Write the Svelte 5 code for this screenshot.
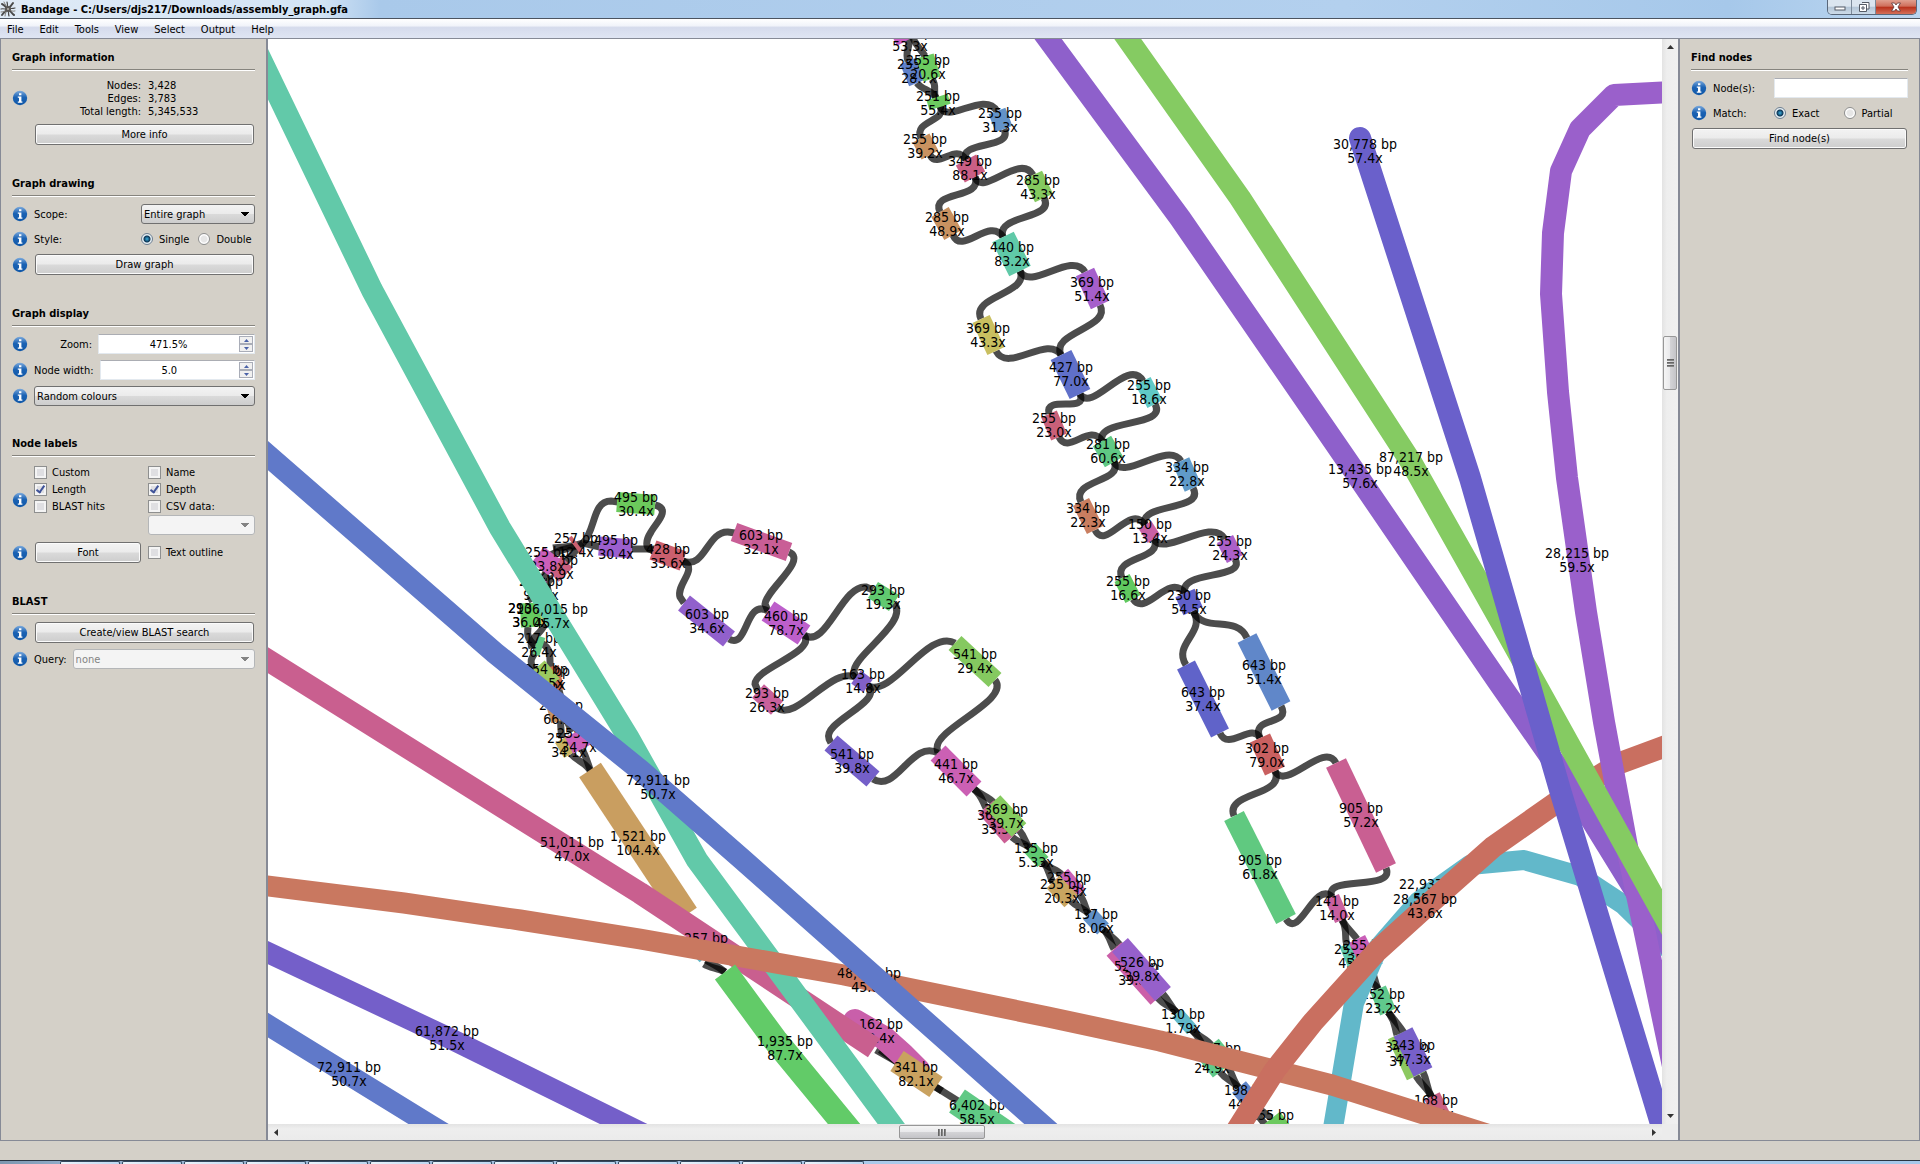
<script>
  // [colour, width, points, first line, second line, label centre x, first baseline, cap]
  const nodes = [
    ['#c85fc0', 20, '900,30 906,41', '255 bp', '53.3x', 910, 37],
    ['#5f80c9', 17, '908,61 917,83', '255 bp', '28.7x', 919, 69],
    ['#6ccb60', 18, '925,56 932,79', '255 bp', '20.6x', 928, 65],
    ['#6ccb60', 22, '937,97 940,107', '251 bp', '55.4x', 938, 101],
    ['#6393c9', 18, '997,111 1004,129', '255 bp', '31.3x', 1000, 118],
    ['#c99260', 19, '921,138 930,155', '255 bp', '39.2x', 925, 144],
    ['#cb5f85', 23, '966,160 975,177', '349 bp', '88.1x', 970, 166],
    ['#85c960', 20, '1033,175 1044,198', '285 bp', '43.3x', 1038, 185],
    ['#c99260', 20, '940,212 953,235', '285 bp', '48.9x', 947, 222],
    ['#60c9a8', 24, '1003,237 1020,271', '440 bp', '83.2x', 1012, 252],
    ['#a65fcb', 20, '1085,272 1100,305', '369 bp', '51.4x', 1092, 287],
    ['#c9bf60', 19, '981,319 996,351', '369 bp', '43.3x', 988, 333],
    ['#6070c9', 23, '1061,355 1080,394', '427 bp', '77.0x', 1071, 372],
    ['#60c9c6', 17, '1143,381 1155,404', '255 bp', '18.6x', 1149, 390],
    ['#c96079', 17, '1049,414 1059,437', '255 bp', '23.0x', 1054, 423],
    ['#60c984', 21, '1102,441 1114,462', '281 bp', '60.6x', 1108, 449],
    ['#609bc9', 18, '1181,461 1193,488', '334 bp', '22.8x', 1187, 472],
    ['#c97e60', 18, '1081,502 1095,530', '334 bp', '22.3x', 1088, 513],
    ['#c960a5', 15, '1145,525 1154,539', '150 bp', '13.4x', 1150, 529],
    ['#ac60c9', 18, '1225,539 1235,559', '255 bp', '24.3x', 1230, 546],
    ['#60c95f', 17, '1122,578 1133,599', '255 bp', '16.6x', 1128, 586],
    ['#6060c9', 21, '1185,593 1193,611', '230 bp', '54.5x', 1189, 600],
    ['#6087c9', 21, '1247,638 1281,706', '643 bp', '51.4x', 1264, 670],
    ['#6063c9', 20, '1186,665 1220,733', '643 bp', '37.4x', 1203, 697],
    ['#c96060', 22, '1260,738 1275,771', '302 bp', '79.0x', 1267, 753],
    ['#c95f92', 22, '1336,763 1386,868', '905 bp', '57.2x', 1361, 813],
    ['#60c980', 22, '1234,816 1286,919', '905 bp', '61.8x', 1260, 865],
    ['#c960a0', 15, '1332,897 1342,920', '141 bp', '14.0x', 1337, 906],
    ['#60c9ad', 16, '1347,944 1356,966', '255 bp', '45.2x', 1356, 954],
    ['#c95fb8', 18, '1357,939 1368,961', '255 bp', '35.1x', 1365, 950],
    ['#60c98c', 17, '1378,989 1388,1012', '252 bp', '23.2x', 1383, 999],
    ['#8dc960', 20, '1397,1035 1416,1076', '343 bp', '37.4x', 1407, 1052],
    ['#7760c9', 21, '1403,1032 1423,1072', '343 bp', '47.3x', 1413, 1050],
    ['#c96085', 17, '1432,1096 1443,1118', '168 bp', '41.3x', 1436, 1105],

    ['#6cc95c', 20, '617,502 655,505', '495 bp', '30.4x', 636, 502],
    ['#9b5fce', 19, '599,546 632,549', '495 bp', '30.4x', 616, 545],
    ['#cb5f6e', 20, '653,550 683,561', '428 bp', '35.6x', 668, 554],
    ['#c95e96', 19, '734,532 789,552', '603 bp', '32.1x', 761, 540],
    ['#9160cc', 19, '684,603 729,639', '603 bp', '34.6x', 707, 619],
    ['#bd5fcb', 23, '768,611 804,635', '460 bp', '78.7x', 786, 621],
    ['#61c970', 19, '873,590 894,603', '293 bp', '19.3x', 883, 595],
    ['#c9619b', 18, '758,691 777,708', '293 bp', '26.3x', 767, 698],
    ['#8260c9', 16, '856,677 868,686', '163 bp', '14.8x', 863, 679],
    ['#85c960', 19, '955,643 995,680', '541 bp', '29.4x', 975, 659],
    ['#745fc9', 20, '831,743 873,779', '541 bp', '39.8x', 852, 759],
    ['#cb60b4', 21, '938,753 974,789', '441 bp', '46.7x', 956, 769],
    ['#cb5f95', 20, '986,807 1012,837', '369 bp', '33.5x', 999, 820],
    ['#85cb5f', 20, '993,802 1019,830', '369 bp', '39.7x', 1006, 814],
    ['#60c971', 15, '1030,848 1043,862', '135 bp', '5.33x', 1036, 853],
    ['#c960b8', 16, '1062,874 1079,894', '255 bp', '24.3x', 1069, 882],
    ['#c9a560', 18, '1053,882 1071,901', '255 bp', '20.3x', 1062, 889],
    ['#6090c9', 16, '1089,914 1103,929', '137 bp', '8.06x', 1096, 919],
    ['#cb5fa8', 20, '1114,949 1158,998', '526 bp', '39.8x', 1136, 971],
    ['#9660cb', 21, '1120,945 1163,994', '526 bp', '39.8x', 1142, 967],
    ['#60b9c9', 13, '1177,1013 1192,1030', '130 bp', '1.79x', 1183, 1019],
    ['#60c989', 20, '1211,1045 1225,1062', '257 bp', '24.6x', 1219, 1053],
    ['#60c989', 18, '1206,1054 1220,1072', '257 bp', '24.9x', 1212, 1059],
    ['#6087c9', 18, '1239,1087 1254,1105', '198 bp', '44.6x', 1246, 1095],
    ['#6cc95f', 20, '1272,1118 1286,1136', '255 bp', '26.3x', 1272, 1120],

    ['#cb6070', 4, '570,537 582,553', '257 bp', '12.4x', 576, 543],
    ['#cb6080', 16, '567,562 553,576', '255 bp', '26.9x', 556, 565],
    ['#cb5fba', 21, '552,553 540,569', '255 bp', '23.8x', 547, 557],
    ['#cb5fba', 8, '543,580 540,590', '216 bp', '97.4x', 541, 586],
    ['#c9c060', 9, '540,611 541,625', '293 bp', '36.0x', 530, 613],
    ['#65cb5f', 20, '530,603 531,627', '293 bp', '36.0x', 530, 613],
    ['#60c985', 7, '542,637 536,655', '217 bp', '26.4x', 539, 643],
    ['#c96c50', 10, '554,666 559,690', '254 bp', '30.5x', 548, 676],
    ['#9cc960', 20, '537,667 552,685', '254 bp', '40.5x', 546, 674],
    ['#c99260', 10, '552,708 556,722', '255 bp', '66.2x', 561, 710],
    ['#c9b360', 16, '562,739 571,754', '255 bp', '34.1x', 569, 743],
    ['#cb5fba', 20, '574,733 582,749', '255 bp', '34.7x', 579, 738],
    ['#c99e60', 26, '590,770 686,915', '1,521 bp', '104.4x', 638, 841],

    ['#c95faa', 24, '855,1021 884,1038 903,1055 918,1070', '162 bp', '8.4x', 881, 1029, 'round'],
    ['#c95f8f', 22, '258,654 640,893 874,1048', '51,011 bp', '47.0x', 572, 847],
    ['#60b9c9', 12, '696,950 704,958', '257 bp', '31.2x', 706, 943],
    ['#c9a260', 24, '897,1061 936,1087', '341 bp', '82.1x', 916, 1072],
    ['#60c985', 28, '957,1101 1024,1147', '6,402 bp', '58.5x', 977, 1110],
    ['#62c9a9', 22, '251,39 372,290 500,528 628,737 697,860 892,1125 903,1140', '106,015 bp', '45.7x', 552, 614],
    ['#62b8ca', 20, '1331,1140 1354,1003 1378,948 1418,902 1470,865 1524,860 1580,876 1624,905 1672,952', '22,937 bp', '52.6x', 1431, 889],
    ['#c97860', 21, '260,885 404,903 520,920 640,939 844,975 1048,1017 1160,1041 1332,1085 1490,1135', '48,612 bp', '45.6x', 869, 978],
    ['#62cb68', 25, '725,972 775,1040 858,1141', '1,935 bp', '87.7x', 785, 1046],
    ['#6079c9', 22, '258,447 495,653 640,770 743,860 1060,1141', '72,911 bp', '50.7x', 658, 785],
    ['#6079c9', 21, '258,1019 430,1125 455,1140', '72,911 bp', '50.7x', 349, 1072],
    ['#745fc9', 21, '258,948 447,1037 650,1137', '61,872 bp', '51.5x', 447, 1036],
    ['#c96f60', 22, '1230,1141 1275,1070 1313,1022 1377,951 1440,894 1493,847 1560,800 1620,763 1674,743', '28,567 bp', '43.6x', 1425, 904],
    ['#8e60cb', 22, '1040,28 1180,218 1359,478 1497,680 1570,785 1675,955', '13,435 bp', '57.6x', 1360, 474],
    ['#9a60cb', 22, '1672,92 1614,95 1580,129 1561,171 1553,233 1551,294 1558,392 1567,478 1586,612 1604,722 1629,857 1678,1090', '28,215 bp', '59.5x', 1577, 558],
    ['#85cb62', 22, '1120,28 1240,198 1411,462 1500,620 1672,930', '87,217 bp', '48.5x', 1411, 462],
    ['#6a60cb', 22, '1360,138 1470,478 1560,790 1672,1160', '30,778 bp', '57.4x', 1365, 149, 'round'],
  ];

  const edges = [
    'M912,36 C916,46 920,48 925,56', 'M908,36 C912,48 904,50 908,61',
    'M917,83 C922,90 932,90 936,98', 'M932,79 C938,88 932,90 936,98',
    'M940,106 C946,126 984,90 997,111', 'M940,106 C948,122 913,120 921,138',
    'M1004,129 C1014,150 958,140 966,160', 'M930,155 C938,170 956,142 966,160',
    'M975,177 C982,198 1020,152 1033,175', 'M975,177 C983,200 930,190 940,212',
    'M1044,198 C1056,220 995,214 1003,237', 'M953,235 C962,256 990,216 1003,237',
    'M1020,271 C1030,292 1072,250 1085,272', 'M1020,271 C1030,294 970,296 981,319',
    'M1100,305 C1112,328 1050,332 1061,355', 'M996,351 C1008,374 1048,334 1061,355',
    'M1080,394 C1092,414 1128,356 1143,381', 'M1080,394 C1088,414 1044,394 1049,414',
    'M1155,404 C1168,428 1096,418 1102,441', 'M1059,437 C1068,456 1090,422 1102,441',
    'M1114,462 C1124,482 1168,440 1181,461', 'M1114,462 C1124,482 1070,480 1081,502',
    'M1193,488 C1206,512 1138,502 1145,525', 'M1095,530 C1106,552 1130,502 1145,525',
    'M1154,539 C1163,558 1212,516 1225,539', 'M1154,539 C1164,560 1112,556 1122,578',
    'M1235,559 C1247,580 1178,570 1185,593', 'M1133,599 C1146,618 1168,572 1185,593',
    'M1193,611 C1204,634 1236,614 1247,638', 'M1193,611 C1207,632 1172,644 1186,665',
    'M1281,706 C1292,726 1250,716 1260,738', 'M1220,733 C1228,752 1252,722 1260,738',
    'M1275,771 C1286,792 1324,740 1336,763', 'M1275,771 C1286,796 1224,792 1234,816',
    'M1386,868 C1396,892 1322,874 1332,897', 'M1286,919 C1300,940 1314,880 1332,897',
    'M1342,920 C1348,930 1344,938 1347,945', 'M1342,920 C1348,930 1352,932 1357,939',
    'M1356,966 C1364,980 1372,980 1378,989', 'M1368,961 C1374,972 1374,980 1378,989',
    'M1388,1012 C1396,1022 1394,1026 1397,1035', 'M1388,1012 C1396,1022 1400,1026 1406,1036',
    'M1416,1076 C1422,1086 1428,1088 1432,1098', 'M1423,1072 C1428,1082 1426,1088 1432,1098',

    'M583,543 C596,530 592,501 611,501 L618,502', 'M655,505 C672,509 655,524 651,532 C644,543 646,551 655,550',
    'M583,543 L600,547', 'M632,549 L655,549',
    'M683,561 C705,570 707,531 728,532 L735,533', 'M683,561 C699,569 676,584 680,597 L684,603',
    'M789,552 C808,560 766,590 765,604 L768,611', 'M729,639 C748,650 745,598 768,611',
    'M804,635 C826,650 842,584 866,587 L873,590', 'M804,635 C817,652 755,668 755,684 L758,691',
    'M894,603 C910,622 853,655 854,672 L857,678', 'M777,708 C798,722 832,664 857,678',
    'M868,686 C892,698 928,628 955,643', 'M868,686 C884,702 822,722 829,739 L831,743',
    'M995,680 C1011,700 936,728 937,748 L938,753', 'M873,779 C896,794 912,739 938,753',
    'M974,789 C982,796 982,800 986,808', 'M974,789 C982,796 988,796 994,803',
    'M1012,837 C1020,844 1024,842 1030,848', 'M1019,830 C1026,838 1024,842 1030,848',
    'M1043,862 C1050,870 1048,874 1053,882', 'M1043,862 C1050,870 1056,868 1062,875',
    'M1071,901 C1078,908 1084,908 1089,914', 'M1079,894 C1086,902 1084,908 1089,914',
    'M1103,929 C1110,936 1110,942 1114,949', 'M1103,929 C1110,936 1114,938 1120,945',
    'M1158,998 C1164,1006 1172,1006 1177,1013', 'M1163,994 C1170,1002 1170,1006 1177,1013',
    'M1192,1030 C1200,1038 1202,1044 1206,1054', 'M1192,1030 C1200,1038 1206,1038 1212,1046',
    'M1220,1072 C1226,1080 1232,1080 1239,1088', 'M1225,1062 C1232,1070 1232,1080 1239,1088',
    'M1254,1105 C1262,1110 1264,1114 1272,1118', 'M1252,1106 C1258,1118 1264,1122 1268,1128',

    'M583,543 C570,548 566,546 553,548', 'M583,543 C574,552 570,556 565,564', 'M576,546 C566,550 560,548 550,556',
    'M548,570 C538,580 548,590 541,600', 'M553,578 C542,582 550,592 550,600',
    'M528,600 C540,594 546,590 548,584',
    'M528,627 C526,640 532,642 537,648', 'M545,624 C540,636 528,638 532,648',
    'M537,650 C530,660 530,660 533,670', 'M536,640 C552,648 550,652 550,670',
    'M559,690 C564,705 558,715 562,738', 'M560,695 C562,708 566,720 572,732',
    'M582,749 C586,756 588,764 591,772', 'M571,754 C578,762 586,762 591,772',
    'M706,960 C712,964 718,966 725,972', 'M704,964 C710,968 718,968 725,972',
    'M876,1050 L897,1062', 'M880,1050 L897,1062', 'M934,1086 L958,1101', 'M934,1086 L942,1091',
  ];

  const menus = ['File', 'Edit', 'Tools', 'View', 'Select', 'Output', 'Help'];
  const tasks = Array.from({ length: 13 });

  let style = $state('single');
  let match = $state('exact');
  let zoom = $state('471.5%');
  let nodeWidth = $state('5.0');
  let query = $state('');
  let labels = $state({ custom: false, name: false, length: true, depth: true, blast: false, csv: false, outline: false });
</script>

{#snippet info()}
  <svg class="info" viewBox="0 0 16 16" aria-hidden="true">
    <defs>
      <linearGradient id="info-fill" x1="0" y1="0" x2="0" y2="1">
        <stop offset="0" stop-color="#7ba9dc" />
        <stop offset=".45" stop-color="#1c63b4" />
        <stop offset="1" stop-color="#0f57a8" />
      </linearGradient>
    </defs>
    <circle cx="8" cy="8" r="7.2" fill="url(#info-fill)" />
    <path d="M7 3.2h2.4v2H7zM5.8 6.5h3.6v5h1v1.2H5.8v-1.2H7V7.7H5.8z" fill="#fff" />
  </svg>
{/snippet}

{#snippet spin(id, get, set)}
  <span class="spin">
    <input {id} type="text" value={get()} oninput={(e) => set(e.currentTarget.value)} />
    <span class="steps">
      <button aria-label="Increase"><svg viewBox="0 0 5 3"><path d="M0 3L2.5 0L5 3z" /></svg></button>
      <button aria-label="Decrease"><svg viewBox="0 0 5 3"><path d="M0 0L2.5 3L5 0z" /></svg></button>
    </span>
  </span>
{/snippet}

{#snippet check(key, text)}
  <label class="tick"><input type="checkbox" bind:checked={labels[key]} />{text}</label>
{/snippet}

<div class="window">
  <header class="title">
    <svg class="logo" viewBox="0 0 16 16" aria-hidden="true">
      <g fill="none" stroke="#4b4b4b" stroke-linecap="round">
        <path d="M2 3C5 4 6 7 8 8S12 13 14 14" stroke-width="2" />
        <path d="M13 2C11 5 10 6 8 8S4 11 2 14" stroke-width="2" />
        <path d="M7 1C8 4 7 6 8 8S8 12 9 15M1 8C4 7 6 9 8 8S12 8 15 7" stroke-width="1.2" />
        <path d="M4 1C5 4 7 5 8 8M1 11C4 11 6 10 8 8M15 10C12 11 10 9 8 8M5 15C5 12 7 10 8 8" stroke="#85827c" />
      </g>
      <circle cx="8" cy="8" r="3" fill="#5a5856" />
      <circle cx="8" cy="8" r="1" fill="#b9b6b0" />
    </svg>
    <h1>Bandage - C:/Users/djs217/Downloads/assembly_graph.gfa</h1>
    <div class="controls">
      <button class="min" aria-label="Minimize"><svg viewBox="0 0 12 10"><rect x="1" y="5" width="10" height="3" fill="#fff" stroke="#555b66" /></svg></button>
      <button class="max" aria-label="Restore"><svg viewBox="0 0 12 10"><path d="M4 .5h7v6.500h-2M1.500 2.500h7v7h-7zM4 5h2v2H4z" fill="#fff" stroke="#555b66" /></svg></button>
      <button class="close" aria-label="Close"><svg viewBox="0 0 12 10"><path d="M1.500 1H4.500L6 3L7.500 1H10.500L8 5L10.500 9H7.500L6 7L4.500 9H1.500L4 5z" fill="#fff" stroke="#5c3a3c" stroke-width=".8" /></svg></button>
    </div>
  </header>

  <nav class="menu">
    {#each menus as m}<button>{m}</button>{/each}
  </nav>

  <main>
    <aside class="dock left">
      <section>
        <h2>Graph information</h2>
        <div class="stats">
          {@render info()}
          <dl>
            <dt>Nodes:</dt><dd>3,428</dd>
            <dt>Edges:</dt><dd>3,783</dd>
            <dt>Total length:</dt><dd>5,345,533</dd>
          </dl>
        </div>
        <div class="row indent"><button class="btn">More info</button></div>
      </section>

      <section class="mid">
        <h2>Graph drawing</h2>
        <div class="row">
          {@render info()}
          <label class="grow" for="scope">Scope:</label>
          <select id="scope" class="scope"><option>Entire graph</option></select>
        </div>
        <div class="row">
          {@render info()}
          <span class="grow">Style:</span>
          <div class="radios">
            <label><input type="radio" name="style" value="single" bind:group={style} />Single</label>
            <label><input type="radio" name="style" value="double" bind:group={style} />Double</label>
          </div>
        </div>
        <div class="row">{@render info()}<button class="btn">Draw graph</button></div>
      </section>

      <section class="display">
        <h2>Graph display</h2>
        <div class="row">
          {@render info()}
          <label class="name" for="zoom">Zoom:</label>
          {@render spin('zoom', () => zoom, (v) => (zoom = v))}
        </div>
        <div class="row">
          {@render info()}
          <label class="name" for="node-width">Node width:</label>
          {@render spin('node-width', () => nodeWidth, (v) => (nodeWidth = v))}
        </div>
        <div class="row">{@render info()}<select class="wide" aria-label="Colour scheme"><option>Random colours</option></select></div>
      </section>

      <section class="labels">
        <h2>Node labels</h2>
        <div class="row">
          {@render info()}
          <div class="ticks">
            {@render check('custom', 'Custom')}
            {@render check('name', 'Name')}
            {@render check('length', 'Length')}
            {@render check('depth', 'Depth')}
            {@render check('blast', 'BLAST hits')}
            {@render check('csv', 'CSV data:')}
            <select class="csv" disabled aria-label="CSV column"><option></option></select>
          </div>
        </div>
        <div class="row">
          {@render info()}
          <div class="pair">
            <button class="btn">Font</button>
            {@render check('outline', 'Text outline')}
          </div>
        </div>
      </section>

      <section>
        <h2>BLAST</h2>
        <div class="row">{@render info()}<button class="btn">Create/view BLAST search</button></div>
        <div class="row">
          {@render info()}
          <label for="query">Query:</label>
          <select id="query" class="wide" disabled><option>none</option></select>
        </div>
      </section>
    </aside>

    <div class="view">
      <svg class="graph" role="img" aria-label="Assembly graph">
        <g transform="translate(-268 -39)">
          <g class="edges">
            {#each edges as d}<path {d} />{/each}
          </g>
          {#each nodes as [colour, width, points, a, b, x, y, cap]}
            <polyline {points} stroke={colour} stroke-width={width} stroke-linecap={cap ?? 'butt'} />
            <text {x} {y}>{a}<tspan {x} dy="14">{b}</tspan></text>
          {/each}
        </g>
      </svg>
      <div class="bar vertical">
        <svg class="arrow" viewBox="0 0 7 4"><path d="M0 4L3.500 0L7 4z" /></svg>
        <div class="before"></div>
        <div class="thumb"><i></i><i></i><i></i></div>
        <div class="after"></div>
        <svg class="arrow" viewBox="0 0 7 4"><path d="M0 0L3.500 4L7 0z" /></svg>
      </div>
      <div class="bar horizontal">
        <svg class="arrow" viewBox="0 0 4 7"><path d="M4 0L0 3.500L4 7z" /></svg>
        <div class="before"></div>
        <div class="thumb"><i></i><i></i><i></i></div>
        <div class="after"></div>
        <svg class="arrow" viewBox="0 0 4 7"><path d="M0 0L4 3.500L0 7z" /></svg>
      </div>
      <div class="corner"></div>
    </div>

    <aside class="dock right">
      <section class="mid">
        <h2>Find nodes</h2>
        <div class="row">
          {@render info()}
          <label class="grow" for="find">Node(s):</label>
          <input id="find" class="find" type="text" bind:value={query} />
        </div>
        <div class="row">
          {@render info()}
          <span class="grow">Match:</span>
          <div class="radios match">
            <label><input type="radio" name="match" value="exact" bind:group={match} />Exact</label>
            <label><input type="radio" name="match" value="partial" bind:group={match} />Partial</label>
          </div>
        </div>
        <div class="row"><button class="btn">Find node(s)</button></div>
      </section>
    </aside>
  </main>

  <footer class="status"></footer>
  <div class="taskbar">
    <div class="tasks">{#each tasks as _}<span></span>{/each}</div>
  </div>
</div>

<style>
  :global(body) {
    margin: 0;
    background: #d4d0c8;
  }
  .window {
    display: grid;
    grid-template-rows: 19px 20px minmax(0, 1fr) 19px 4px;
    height: 100vh;
    overflow: hidden;
    background: #d4d0c8;
    color: #000;
    font: 11px/13px 'DejaVu Sans Condensed', 'DejaVu Sans', sans-serif;
    font-stretch: condensed;
  }
  button,
  input,
  select {
    box-sizing: border-box;
    margin: 0;
    font: inherit;
    color: inherit;
  }
  .title {
    display: flex;
    align-items: center;
    gap: 5px;
    border-bottom: 1px solid #4c5460;
    background: linear-gradient(90deg, #dfeaf6 0, #d3e4f5 320px, #a9c9ea 380px, #b3d0ee 70%, #a6c8ea 90%, #bcd6f0 100%);
  }
  .logo {
    width: 16px;
    height: 16px;
  }
  h1 {
    flex: 1;
    margin: 0;
    padding-top: 1px;
    font-size: 11px;
    font-weight: bold;
  }
  .controls {
    display: flex;
    align-self: flex-start;
    height: 15px;
    margin-right: 3px;
    border: 1px solid #59677a;
    border-top: 0;
    border-radius: 0 0 5px 5px;
    overflow: hidden;
    box-sizing: border-box;
  }
  .controls button {
    display: grid;
    place-items: center;
    width: 24px;
    padding: 0;
    border: 0;
    border-right: 1px solid #7b8999;
    background: linear-gradient(#dbe5ef 45%, #b3c5d7 50%, #cddbe8);
  }
  .controls .close {
    width: 40px;
    border-right: 0;
    background: linear-gradient(#e0a090 0, #cf6e5a 45%, #b8301a 50%, #d4705a);
  }
  .controls svg {
    width: 12px;
    height: 10px;
  }
  .menu {
    display: flex;
    align-items: center;
    gap: 16px;
    padding: 1px 0 0 7px;
    border-bottom: 1px solid #868a96;
    background: linear-gradient(#fff 0, #f1f4fa 35%, #d5dbec 45%, #dfe5f3);
  }
  .menu button {
    padding: 0;
    border: 0;
    background: none;
  }
  main {
    display: grid;
    grid-template-columns: 266px minmax(0, 1fr) 242px;
    min-height: 0;
    border-bottom: 1px solid #868a96;
  }
  .dock {
    box-sizing: border-box;
    padding: 0 11px;
    border-left: 1px solid #868a96;
  }
  .dock.right {
    border-left: 2px solid #868a96;
    border-right: 1px solid #868a96;
  }
  section {
    display: flex;
    flex-direction: column;
    gap: 6px;
    margin-bottom: 20px;
  }
  section.mid {
    gap: 5px;
  }
  section.display {
    margin-bottom: 19px;
  }
  section.labels {
    gap: 7px;
  }
  h2 {
    box-sizing: border-box;
    height: 32px;
    margin: 0 0 1px;
    padding-top: 12px;
    border-bottom: 1px solid #fff;
    box-shadow: inset 0 -1px #86847e;
    font-size: 11px;
    line-height: 13px;
    font-weight: bold;
  }
  .mid h2 {
    margin-bottom: 2px;
  }
  .labels h2 {
    margin-bottom: 0;
  }
  .row {
    display: flex;
    align-items: center;
    gap: 6px;
    min-height: 20px;
  }
  .row.indent {
    padding-left: 22px;
  }
  .info {
    flex: none;
    width: 16px;
    height: 16px;
  }
  .grow {
    flex: 1;
  }
  .name {
    flex: none;
    min-width: 58px;
    text-align: right;
    white-space: nowrap;
  }
  .stats {
    display: flex;
    align-items: center;
  }
  dl {
    flex: 1;
    display: grid;
    grid-template-columns: 113px 1fr;
    column-gap: 7px;
    margin: 0;
    padding-top: 1px;
  }
  dt {
    text-align: right;
  }
  dd {
    margin: 0;
  }
  .btn {
    flex: 1;
    height: 21px;
    margin: 0 1px;
    padding: 0;
    border: 1px solid #707070;
    border-radius: 3px;
    background: linear-gradient(#f3f3f3, #ebebeb 48%, #dadada 52%, #cdcdcd);
    box-shadow: inset 0 0 0 1px #fbfbfb;
  }
  select {
    appearance: none;
    height: 20px;
    padding: 0 20px 0 2px;
    border: 1px solid #707070;
    border-radius: 3px;
    background:
      linear-gradient(to top right, transparent 50%, #000 50%) right 9px center / 4px 4px no-repeat,
      linear-gradient(to top left, transparent 50%, #000 50%) right 5px center / 4px 4px no-repeat,
      linear-gradient(#f3f3f3, #ebebeb 48%, #dadada 52%, #cdcdcd);
  }
  select:disabled {
    opacity: 1;
    color: #838383;
    border-color: #b4b6b8;
    background:
      linear-gradient(to top right, transparent 50%, #838383 50%) right 9px center / 4px 4px no-repeat,
      linear-gradient(to top left, transparent 50%, #838383 50%) right 5px center / 4px 4px no-repeat,
      #f4f4f4;
  }
  .scope {
    width: 114px;
  }
  .wide {
    flex: 1;
    min-width: 0;
  }
  .radios {
    display: flex;
    gap: 9px;
    width: 114px;
  }
  .radios.match {
    width: 134px;
    gap: 24px;
  }
  .radios label {
    display: flex;
    align-items: center;
    gap: 6px;
    white-space: nowrap;
  }
  input[type='radio'] {
    appearance: none;
    width: 12px;
    height: 12px;
    border: 1px solid #8e8f8f;
    border-radius: 50%;
    background: radial-gradient(#e6e6e6 40%, #fff 60%);
  }
  input[type='radio']:checked {
    border-color: #6d7f92;
    background: radial-gradient(circle, #3bb0e0 0, #0c3454 3px, #0c3454 3px, #e8f0f4 4px);
  }
  .spin {
    display: flex;
    flex: 1;
    min-width: 0;
    height: 20px;
    box-sizing: border-box;
    border: 1px solid #e3e9ef;
    border-top-color: #abadb3;
    background: #fff;
  }
  .spin input {
    flex: 1;
    min-width: 0;
    padding: 0;
    border: 0;
    background: none;
    text-align: center;
  }
  .steps {
    display: flex;
    flex-direction: column;
    width: 14px;
    margin: 1px;
  }
  .steps button {
    display: grid;
    place-items: center;
    flex: 1;
    padding: 0;
    border: 1px solid #a9adb8;
    background: #f0f0f0;
  }
  .steps svg {
    width: 5px;
    height: 3px;
    fill: #4a62a8;
  }
  .ticks {
    flex: 1;
    display: grid;
    grid-template-columns: 114px 1fr;
    grid-template-rows: 17px 17px 17px 20px;
  }
  .ticks .csv {
    grid-column: 2;
  }
  .tick {
    display: flex;
    align-items: center;
    gap: 5px;
  }
  input[type='checkbox'] {
    appearance: none;
    display: grid;
    place-items: center;
    width: 13px;
    height: 13px;
    border: 1px solid #8e8f8f;
    background: #dfdfe2;
    box-shadow: inset 0 0 0 2px #f4f4f4;
  }
  input[type='checkbox']:checked::after {
    content: '';
    width: 3px;
    height: 7px;
    margin-bottom: 3px;
    border: solid #3f5399;
    border-width: 0 2px 2px 0;
    transform: rotate(35deg);
  }
  .pair {
    flex: 1;
    display: grid;
    grid-template-columns: 108px 1fr;
    gap: 6px;
  }
  .find {
    width: 134px;
    height: 20px;
    padding: 0 3px;
    border: 1px solid #e3e9ef;
    border-top-color: #abadb3;
    background: #fff;
  }
  .view {
    display: grid;
    grid-template: minmax(0, 1fr) 16px / minmax(0, 1fr) 16px;
    border-left: 2px solid #868a96;
    background: #fff;
    min-height: 0;
  }
  .graph {
    width: 100%;
    height: 100%;
    overflow: hidden;
  }
  .graph polyline {
    fill: none;
    stroke-linejoin: round;
  }
  .edges path {
    fill: none;
    stroke: #000;
    stroke-opacity: 0.7;
    stroke-width: 7px;
  }
  .graph text {
    font-size: 14px;
    text-anchor: middle;
  }
  .bar {
    display: flex;
    align-items: center;
    justify-content: space-between;
    background: linear-gradient(90deg, #e3e3e3, #eee 30%, #f0f0f0);
  }
  .vertical {
    flex-direction: column;
    padding: 6px 0;
  }
  .horizontal {
    padding: 0 6px;
    background: linear-gradient(#e3e3e3, #eee 30%, #ebebeb);
  }
  .corner {
    background: #ececec;
  }
  .arrow {
    flex: none;
    width: 7px;
    height: 4px;
    fill: #333;
  }
  .horizontal .arrow {
    width: 4px;
    height: 7px;
  }
  .thumb {
    display: flex;
    align-items: center;
    justify-content: center;
    gap: 1px;
    box-sizing: border-box;
    border: 1px solid #979797;
    border-radius: 2px;
  }
  .vertical .thumb {
    flex: 52;
    flex-direction: column;
    width: 14px;
    background: linear-gradient(90deg, #f5f5f5, #e9e9eb 48%, #d3d3d6 52%, #c4c4c8);
  }
  .vertical .before {
    flex: 288;
  }
  .vertical .after {
    flex: 726;
  }
  .horizontal .thumb {
    flex: 84;
    height: 14px;
    background: linear-gradient(#f5f5f5, #e9e9eb 48%, #d3d3d6 52%, #c4c4c8);
  }
  .horizontal .before {
    flex: 622;
  }
  .horizontal .after {
    flex: 668;
  }
  .thumb i {
    width: 2px;
    height: 7px;
    background: linear-gradient(90deg, #555, #999);
  }
  .vertical .thumb i {
    width: 7px;
    height: 2px;
    background: linear-gradient(#555, #999);
  }
  .taskbar {
    box-sizing: border-box;
    border-top: 1px solid #2a3542;
    background: linear-gradient(90deg, #7d97b0, #8fabc8 60px, #a9c9ea 45%, #b8d3ee 60%, #a6c8ea);
  }
  .tasks {
    display: flex;
    gap: 2px;
    padding-left: 60px;
  }
  .tasks span {
    width: 60px;
    height: 3px;
    box-sizing: border-box;
    border: 1px solid #33485e;
    border-bottom: 0;
    border-radius: 2px 2px 0 0;
    background: linear-gradient(90deg, #eaf3fb, #bdd8f2);
  }
</style>
